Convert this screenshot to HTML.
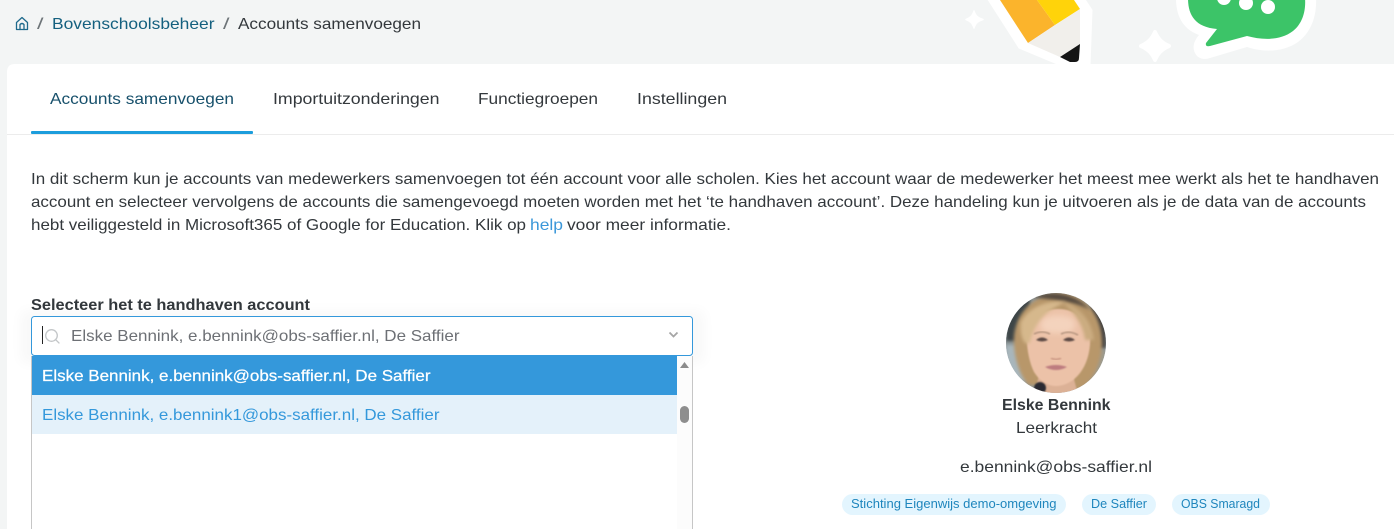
<!DOCTYPE html>
<html lang="nl">
<head>
<meta charset="utf-8">
<title>Accounts samenvoegen</title>
<style>
html,body{margin:0;padding:0;width:1394px;height:529px;overflow:hidden;background:#f3f5f5}
svg{display:block}
text{font-family:"Liberation Sans",sans-serif;font-size:16px;fill:#33383c}
</style>
</head>
<body>
<svg width="1394" height="529" viewBox="0 0 1394 529" xmlns="http://www.w3.org/2000/svg">
<defs>
<filter id="b1" x="-30%" y="-30%" width="160%" height="160%"><feGaussianBlur stdDeviation="1.600"/></filter>
<filter id="b2" x="-30%" y="-30%" width="160%" height="160%"><feGaussianBlur stdDeviation="0.700"/></filter>
<filter id="b3" x="-30%" y="-30%" width="160%" height="160%"><feGaussianBlur stdDeviation="3"/></filter>
<filter id="sh" x="-5%" y="-30%" width="110%" height="160%"><feGaussianBlur stdDeviation="6"/></filter>
<clipPath id="av"><circle cx="1056" cy="343" r="50"/></clipPath>
<clipPath id="top"><rect x="900" y="0" width="494" height="64"/></clipPath>
</defs>

<rect width="1394" height="529" fill="#f3f5f5"/>

<!-- decoration -->
<g clip-path="url(#top)">
  <path d="M974 11C975.500 16 978 18 983 19.500C978 21 975.500 23 974 28C972.500 23 970 21 966 19.500C970 18 972.500 16 974 11Z" fill="#fff" stroke="#fff" stroke-width="1.500" stroke-linejoin="round"/>
  <path d="M1155 32C1158 39 1162 43 1169 46C1162 49 1158 53 1155 60C1152 53 1148 49 1141 46C1148 43 1152 39 1155 32Z" fill="#fff" stroke="#fff" stroke-width="4" stroke-linejoin="round"/>
  <path d="M987 -2L1019 48L1062 66L1090 66L1092 10L1084 -2Z" fill="#fff" stroke="#fff" stroke-width="1" stroke-linejoin="round"/>
  <path d="M1000 0L1028 43L1055 25L1037 0Z" fill="#fbb42c"/>
  <path d="M1037 0L1055 25L1080 9L1074 0Z" fill="#ffd30a"/>
  <path d="M1028 43L1055 25L1080 9L1080 44L1060 57Z" fill="#f1efeb"/>
  <path d="M1060 57L1080 44L1079 58Q1079 62 1075 62L1070 62Z" fill="#151515"/>
  <path d="M1176 -2C1176 12 1180 28 1199 35C1194 41 1192 47 1195 53C1198 59 1204 60 1210 58L1247 47C1262 52 1282 53 1298 42C1310 33 1317 18 1316 -2Z" fill="#fff"/>
  <path d="M1188 -2C1188 14 1194 27 1217 29L1206 43Q1205 47 1210 46L1247 36C1262 40 1280 41 1293 31C1303 23 1306 10 1305 -2Z" fill="#3cc468"/>
  <circle cx="1224" cy="-2" r="7" fill="#fff"/>
  <circle cx="1246" cy="3" r="7" fill="#fff"/>
  <circle cx="1268" cy="7" r="7" fill="#fff"/>
</g>

<!-- breadcrumb -->
<g fill="none" stroke="#1f6a8c" stroke-width="1.300" stroke-linejoin="round" stroke-linecap="round">
  <path d="M16.500 22.500L22 17.500L27.500 22.500L27.500 29.500L16.500 29.500Z"/>
  <path d="M20 29.500L20 24.500Q22 22.500 24 24.500L24 29.500"/>
</g>
<text x="37" y="29" style="fill:#6d7478" textLength="6.500" lengthAdjust="spacingAndGlyphs">/</text>
<text x="52" y="29" style="fill:#14607f" textLength="162.500" lengthAdjust="spacingAndGlyphs">Bovenschoolsbeheer</text>
<text x="223" y="29" style="fill:#6d7478" textLength="6.500" lengthAdjust="spacingAndGlyphs">/</text>
<text x="238" y="29" style="fill:#33383c" textLength="183" lengthAdjust="spacingAndGlyphs">Accounts samenvoegen</text>

<!-- card -->
<path d="M7 529L7 72Q7 64 15 64L1394 64L1394 529Z" fill="#fff"/>
<rect x="7" y="134" width="1387" height="1" fill="#ececec"/>
<rect x="31" y="131" width="222" height="3" rx="1" fill="#1c9ddc"/>

<!-- tabs -->
<text x="50" y="104" style="fill:#17506b" textLength="184" lengthAdjust="spacingAndGlyphs">Accounts samenvoegen</text>
<text x="273" y="104" textLength="166.500" lengthAdjust="spacingAndGlyphs">Importuitzonderingen</text>
<text x="478" y="104" textLength="120" lengthAdjust="spacingAndGlyphs">Functiegroepen</text>
<text x="637" y="104" textLength="90" lengthAdjust="spacingAndGlyphs">Instellingen</text>

<!-- paragraph -->
<text x="31" y="184" textLength="1348" lengthAdjust="spacingAndGlyphs">In dit scherm kun je accounts van medewerkers samenvoegen tot één account voor alle scholen. Kies het account waar de medewerker het meest mee werkt als het te handhaven</text>
<text x="31" y="207" textLength="1335" lengthAdjust="spacingAndGlyphs">account en selecteer vervolgens de accounts die samengevoegd moeten worden met het ‘te handhaven account’. Deze handeling kun je uitvoeren als je de data van de accounts</text>
<text x="31" y="230" textLength="495" lengthAdjust="spacingAndGlyphs">hebt veiliggesteld in Microsoft365 of Google for Education. Klik op</text>
<text x="530" y="230" style="fill:#3a97d9" textLength="33" lengthAdjust="spacingAndGlyphs">help</text>
<text x="567" y="230" textLength="164" lengthAdjust="spacingAndGlyphs">voor meer informatie.</text>

<!-- select label -->
<text x="31" y="310" style="font-weight:700;fill:#33383c" textLength="279" lengthAdjust="spacingAndGlyphs">Selecteer het te handhaven account</text>

<!-- select -->
<rect x="20" y="310" width="685" height="54" rx="6" fill="#000" opacity="0.025" filter="url(#sh)"/>
<rect x="31.500" y="316.500" width="661" height="39" rx="3" fill="#fff" stroke="#3498db"/>
<rect x="42" y="326" width="1" height="18" fill="#222"/>
<g fill="none" stroke="#c3c6c8" stroke-width="1.300" stroke-linecap="round">
  <circle cx="51.500" cy="335.500" r="5.800"/>
  <path d="M55.700 339.700L59 343"/>
</g>
<text x="71" y="341" style="fill:#6d7075" textLength="388.500" lengthAdjust="spacingAndGlyphs">Elske Bennink, e.bennink@obs-saffier.nl, De Saffier</text>
<path d="M669.500 332.500L673.500 336.500L677.500 332.500" fill="none" stroke="#a6a6a6" stroke-width="1.800"/>

<!-- dropdown -->
<rect x="31" y="356" width="662" height="173" fill="#fff"/>
<rect x="31" y="356" width="1" height="173" fill="#c6c6c6"/>
<rect x="692" y="356" width="1" height="173" fill="#c6c6c6"/>
<rect x="677" y="356" width="15" height="173" fill="#fcfcfc"/>
<rect x="32" y="356" width="645" height="39" fill="#3498db"/>
<rect x="32" y="395" width="645" height="39" fill="#e4f1fa"/>
<text x="42" y="381" style="fill:#fff;stroke:#fff;stroke-width:0.250" textLength="388.500" lengthAdjust="spacingAndGlyphs">Elske Bennink, e.bennink@obs-saffier.nl, De Saffier</text>
<text x="42" y="420" style="fill:#3498db" textLength="397.500" lengthAdjust="spacingAndGlyphs">Elske Bennink, e.bennink1@obs-saffier.nl, De Saffier</text>
<path d="M680 368L684.500 362L689 368Z" fill="#8c8c8c"/>
<rect x="680" y="406" width="9" height="17" rx="4.500" fill="#8e8e8e"/>

<!-- avatar -->
<g clip-path="url(#av)">
  <rect x="1006" y="293" width="100" height="100" fill="#8d9698"/>
  <rect x="1006" y="293" width="24" height="48" fill="#3e4446" filter="url(#b1)"/>
  <rect x="1006" y="345" width="24" height="36" fill="#a8b6bc" filter="url(#b1)"/>
  <rect x="1090" y="298" width="16" height="50" fill="#45433f" filter="url(#b1)"/>
  <rect x="1092" y="350" width="14" height="30" fill="#9c9a8e" filter="url(#b1)"/>
  <path d="M1014 345C1012 318 1030 294 1060 293C1088 293 1103 320 1102 345C1101 365 1092 382 1082 390L1028 385C1020 375 1015 360 1014 345Z" fill="#b8976a" filter="url(#b1)"/>
  <path d="M1032 297C1050 290 1075 292 1090 310C1076 301 1052 300 1032 297Z" fill="#564c40" filter="url(#b1)"/>
  <path d="M1040 372L1072 372L1078 394L1034 394Z" fill="#dcb196" filter="url(#b2)"/>
  <path d="M1027 332C1030 318 1042 309 1058 309C1076 309 1088 320 1090 336C1091 350 1087 364 1080 373C1073 382 1064 386 1056 386C1047 386 1039 380 1034 372C1029 362 1026 346 1027 332Z" fill="#ecc2a8" filter="url(#b2)"/>
  <path d="M1042 320C1050 314 1066 314 1074 320C1078 330 1070 334 1056 333C1044 333 1038 330 1042 320Z" fill="#f4d3bd" filter="url(#b3)"/>
  <path d="M1021 322C1030 306 1048 300 1066 302C1054 307 1036 316 1030 342C1026 348 1019 338 1021 322Z" fill="#d6b88c" filter="url(#b1)"/>
  <path d="M1062 302C1078 305 1092 320 1094 340L1085 340C1083 324 1074 312 1062 302Z" fill="#cbac80" filter="url(#b1)"/>
  <path d="M1036 340Q1042 335 1048 340Q1042 343 1036 340Z" fill="#5b4a45" filter="url(#b2)"/>
  <path d="M1063 340Q1069 335 1075 340Q1069 343 1063 340Z" fill="#5b4a45" filter="url(#b2)"/>
  <path d="M1034 334Q1042 330 1050 334" fill="none" stroke="#a98a75" stroke-width="1.300" filter="url(#b2)"/>
  <path d="M1061 334Q1069 330 1078 335" fill="none" stroke="#a98a75" stroke-width="1.300" filter="url(#b2)"/>
  <path d="M1051 358Q1056 361 1061 358" fill="none" stroke="#cf9d88" stroke-width="2" filter="url(#b2)"/>
  <path d="M1045 367Q1056 363 1067 367Q1056 373 1045 367Z" fill="#bd7b7f" filter="url(#b2)"/>
  <circle cx="1040" cy="388" r="6" fill="#2c2c30" filter="url(#b2)"/>
</g>

<!-- profile -->
<text x="1002" y="410" style="font-weight:700;fill:#33383c" textLength="108.500" lengthAdjust="spacingAndGlyphs">Elske Bennink</text>
<text x="1016" y="433" textLength="81" lengthAdjust="spacingAndGlyphs">Leerkracht</text>
<text x="960" y="472" textLength="192" lengthAdjust="spacingAndGlyphs">e.bennink@obs-saffier.nl</text>

<rect x="842" y="494" width="224" height="21" rx="10.500" fill="#e3f5fe"/>
<rect x="1082" y="494" width="74" height="21" rx="10.500" fill="#e3f5fe"/>
<rect x="1172" y="494" width="98" height="21" rx="10.500" fill="#e3f5fe"/>
<text x="851" y="508" style="font-size:12.500px;fill:#1f86bd" textLength="205.500" lengthAdjust="spacingAndGlyphs">Stichting Eigenwijs demo-omgeving</text>
<text x="1091" y="508" style="font-size:12.500px;fill:#1f86bd" textLength="56" lengthAdjust="spacingAndGlyphs">De Saffier</text>
<text x="1181" y="508" style="font-size:12.500px;fill:#1f86bd" textLength="79" lengthAdjust="spacingAndGlyphs">OBS Smaragd</text>
</svg>
</body>
</html>
